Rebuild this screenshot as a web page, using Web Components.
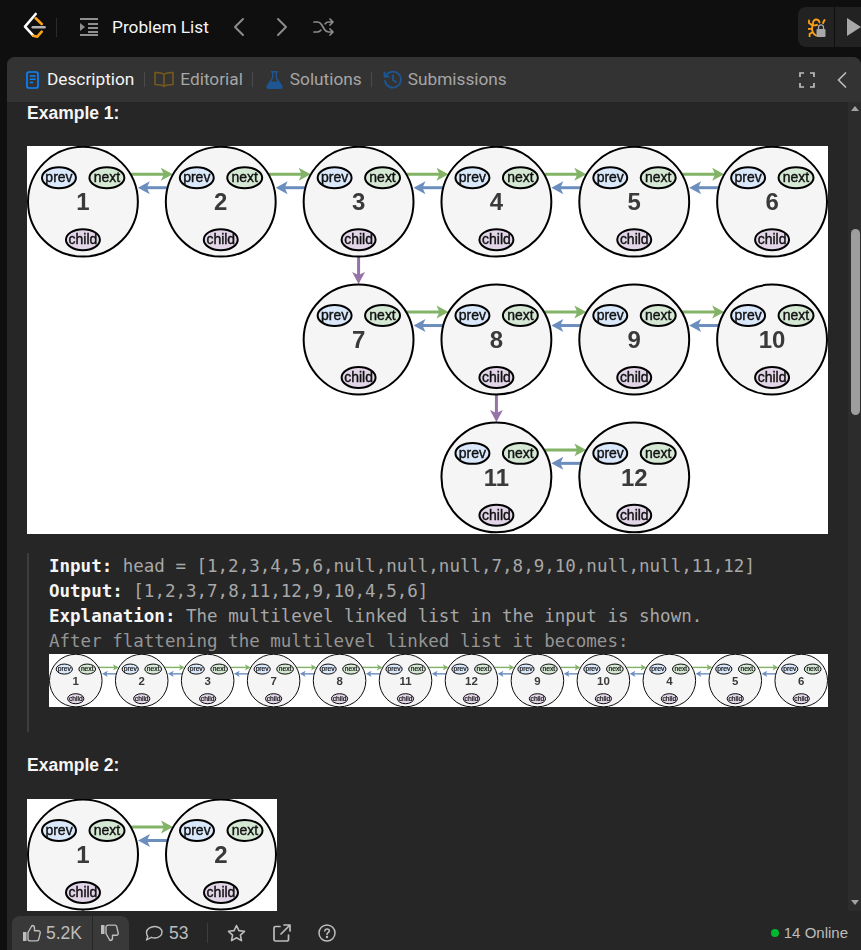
<!DOCTYPE html>
<html>
<head>
<meta charset="utf-8">
<style>
  html, body { margin: 0; height: 950px; overflow: hidden; background: #0f0f0f; font-family: Roboto, "Liberation Sans", sans-serif; }
  lc-app { height: 950px; }
</style>
</head>
<body>
<lc-app>
  <lc-topbar slot="top"></lc-topbar>
  <lc-panel>
    <lc-tabs slot="tabs"></lc-tabs>
    <lc-heading>Example 1:</lc-heading>
    <lc-diagram style="margin-top:21px" width="801" height="388" nodes="0:1 2 3 4 5 6;2:7 8 9 10;3:11 12"></lc-diagram>
    <lc-example>
      <lc-line label="Input:">head = [1,2,3,4,5,6,null,null,null,7,8,9,10,null,null,11,12]</lc-line>
      <lc-line label="Output:">[1,2,3,7,8,11,12,9,10,4,5,6]</lc-line>
      <lc-line label="Explanation:">The multilevel linked list in the input is shown.</lc-line>
      <lc-line>After flattening the multilevel linked list it becomes:</lc-line>
      <lc-diagram width="779" height="53" nodes="0:1 2 3 7 8 11 12 9 10 4 5 6"></lc-diagram>
    </lc-example>
    <lc-heading style="margin-top:21px">Example 2:</lc-heading>
    <lc-diagram style="margin-top:22px" width="250" height="112" stub nodes="0:1 2"></lc-diagram>
    <lc-footer slot="footer"></lc-footer>
  </lc-panel>
</lc-app>

<script>
const icons = {
  logo: `<svg width="24" height="26" viewBox="0 0 24 26" fill="none" stroke-width="2.6" stroke-linecap="round" stroke-linejoin="round"><path d="M13.7 2 3 14.7 11.3 23.7" stroke="#fff"/><path d="M13.7 6.3 19.7 12M11.3 23.7 15.3 24.7 19.7 19.7" stroke="#ffa116"/><path d="M10.8 15.3H22.5" stroke="#b3b3b3"/></svg>`,
  list: `<svg width="18" height="18" viewBox="0 0 18 18" fill="#8f8f8f"><path d="M0 0h18v2H0zM8 5h10v2H8zM8 9h10v2H8zM0 16h18v2H0zM8 13h10v2H8zM0 5l5 4-5 4z"/></svg>`,
  left: `<svg width="12" height="20" viewBox="0 0 12 20" fill="none" stroke="#8c8c8c" stroke-width="2" stroke-linecap="round" stroke-linejoin="round"><path d="M10 2 2 10l8 8"/></svg>`,
  right: `<svg width="12" height="20" viewBox="0 0 12 20" fill="none" stroke="#8c8c8c" stroke-width="2" stroke-linecap="round" stroke-linejoin="round"><path d="m2 2 8 8-8 8"/></svg>`,
  shuffle: `<svg width="21" height="18" viewBox="0 0 21 18" fill="none" stroke="#8c8c8c" stroke-width="1.7" stroke-linecap="round" stroke-linejoin="round"><path d="M1 4h3.500c2 0 3 1 4 2.500l3 5c1 1.500 2 2.500 4 2.500H20M1 14h3.500c1.500 0 2.500-.7 3.300-1.800M12.200 5.800C13 4.700 14 4 15.500 4H20M17 1l3 3-3 3M17 11l3 3-3 3"/></svg>`,
  bug: `<svg width="18" height="19" viewBox="0 0 18 19" fill="none"><path d="M5 5C5 2.800 6.800 1.300 8.500 1.500c1.600.2 2.800 1.400 3 3M4 6.500c1 .8 3 1 5 .3M5 6C3.800 9 3.800 12 5 14.500c.8 1.500 2 2.500 3 3M4.500 7.500 1 5V2.500M4 10.800H0M4.800 14 1.600 16V18.500M16.500 2 15 5" stroke="#ffa116" stroke-width="1.800" stroke-linecap="round"/><rect x="8.500" y="11" width="9" height="8" rx="1" fill="#a8a8a8"/><path d="M10.500 11V9.300a2.500 2.500 0 0 1 5 0V11" stroke="#a8a8a8" stroke-width="1.300"/></svg>`,
  doc: `<svg width="13" height="18" viewBox="0 0 13 18" fill="none"><rect x="1" y="1" width="11" height="16" rx="2" stroke="#0a84ff" stroke-width="1.700"/><path d="M3.800 5h5.800M3.800 8.300h5.800M3.800 11.600h3.200" stroke="#0a84ff" stroke-width="1.500"/></svg>`,
  book: `<svg width="20" height="17" viewBox="0 0 20 17" fill="none" stroke="#75591d" stroke-width="1.600"><path d="M10 3.500C8.500 2 6.500 1.500 1 1.500v12c5.500 0 7.500.4 9 1.800 1.500-1.400 3.500-1.800 9-1.800v-12c-5.500 0-7.500.5-9 2zM10 3.500v11.800"/></svg>`,
  flask: `<svg width="17" height="18" viewBox="0 0 17 18" fill="#1d5693"><path d="M5 0h7v1.500h-1v5l5.300 8.300c.8 1.400-.1 3.200-1.700 3.200H2.400C.8 18-.1 16.200.7 14.800L6 6.500v-5H5zM7.400 1.500v5.400L5.200 10.500h6.600L9.600 6.900V1.500z"/></svg>`,
  history: `<svg width="19" height="19" viewBox="0 0 19 19" fill="none" stroke="#1d5693" stroke-width="1.800" stroke-linecap="round" stroke-linejoin="round"><path d="M2.500 6.500A8 8 0 1 1 2 11M1.500 2.500v4.200h4.200M10 5.500v4.500l3 2"/></svg>`,
  full: `<svg width="16" height="16" viewBox="0 0 16 16" fill="none" stroke="#bdbdbd" stroke-width="1.700"><path d="M1 5V1h4M11 1h4v4M15 11v4h-4M5 15H1v-4"/></svg>`,
  collapse: `<svg width="10" height="16" viewBox="0 0 10 16" fill="none" stroke="#bdbdbd" stroke-width="1.700" stroke-linecap="round" stroke-linejoin="round"><path d="M8.500 1 1.500 8l7 7"/></svg>`,
  up: `<svg width="18" height="18" viewBox="0 0 18 18" fill="none" stroke="#bdbdbd" stroke-width="1.400" stroke-linejoin="round"><rect x="0" y="8" width="3.500" height="9" fill="#bdbdbd" stroke="none"/><path d="M5 8.500 9 1.500c1.500 0 2.500 1 2.500 2.500v2.700h4c1 0 2 1 1.700 2.200l-1.400 6.300c-.2 1-1 1.700-2 1.700H7.500C6 16.900 5 16 5 15z"/></svg>`,
  down: `<svg width="18" height="18" viewBox="0 0 18 18" fill="none" stroke="#bdbdbd" stroke-width="1.400" stroke-linejoin="round"><rect x="0" y="1" width="3.500" height="9" fill="#bdbdbd" stroke="none"/><path d="M5 9.500 9 16.500c1.500 0 2.500-1 2.500-2.500v-2.700h4c1 0 2-1 1.700-2.200l-1.400-6.300c-.2-1-1-1.700-2-1.700H7.500C6 1.100 5 2 5 3z"/></svg>`,
  comment: `<svg width="18" height="18" viewBox="0 0 18 18" fill="none" stroke="#bdbdbd" stroke-width="1.400" stroke-linejoin="round"><path d="M9.800 2.500c4 0 7.200 2.500 7.200 5.700s-3.200 5.800-7.200 5.800c-1.300 0-2.500-.3-3.500-.7L1.500 16l1.300-3.600C1.700 11.300 1.500 9.700 1.500 8.200c0-3.200 4.300-5.700 8.300-5.700z"/></svg>`,
  star: `<svg width="19" height="18" viewBox="0 0 19 18" fill="none" stroke="#bdbdbd" stroke-width="1.600" stroke-linejoin="round"><path d="m9.500 1.500 2.400 5.100 5.600.7-4.100 3.800 1.100 5.500-5-2.800-5 2.800 1.100-5.500L1.500 7.300l5.600-.7z"/></svg>`,
  share: `<svg width="18" height="18" viewBox="0 0 18 18" fill="none" stroke="#bdbdbd" stroke-width="1.700" stroke-linecap="round" stroke-linejoin="round"><path d="M7 2.500H2.500a1.500 1.500 0 0 0-1.500 1.500v11.500A1.500 1.500 0 0 0 2.500 17H14a1.500 1.500 0 0 0 1.500-1.500V11M11 1h6v6M17 1 8 10"/></svg>`,
  help: `<svg width="18" height="18" viewBox="0 0 18 18" fill="none" stroke="#bdbdbd" stroke-width="1.500" stroke-linecap="round"><circle cx="9" cy="9" r="8"/><path d="M6.800 7c.2-1.300 1.100-2 2.300-2 1.300 0 2.200.8 2.200 1.900 0 1.800-2.300 1.800-2.300 3.500"/><circle cx="9" cy="13" r=".5" fill="#bdbdbd"/></svg>`
};

class LcIcon extends HTMLElement {
  constructor() {
    super();
    this.attachShadow({mode: 'open'});
    this.shadowRoot.innerHTML = `<style>:host{display:inline-flex;align-items:center;justify-content:center;flex:none} svg{display:block}</style>` + (icons[this.getAttribute('name')] || '');
  }
}

class LcApp extends HTMLElement {
  constructor() {
    super();
    this.attachShadow({mode: 'open'});
    this.shadowRoot.innerHTML = `<style>
      :host { display: flex; flex-direction: column; }
      ::slotted(lc-panel) { flex: 1; min-height: 0; }
    </style><slot name="top"></slot><slot></slot>`;
  }
}

class LcTopbar extends HTMLElement {
  constructor() {
    super();
    this.attachShadow({mode: 'open'});
    this.shadowRoot.innerHTML = `<style>
      :host { display: flex; align-items: center; height: 57px; padding-left: 22px; box-sizing: border-box; color: #f5f5f5; font: 17.25px/24px Roboto, "Liberation Sans", sans-serif; }
      .logo { margin-top: -3px; }
      .sep { width: 1px; height: 19px; background: #2b2b2b; margin: -3px 23px 0 10px; }
      .title { margin: 0 24px 0 14px; position: relative; top: -2px; }
      lc-icon { position: relative; top: -2px; }
      .next { margin-left: 31px; }
      .shuffle { margin-left: 25px; }
      .group { margin-left: auto; width: 63px; height: 40px; margin-top: -3px; display: flex; background: #222; border-radius: 8px 0 0 8px; overflow: hidden; }
      .bug { width: 40px; display: flex; align-items: center; justify-content: center; border-right: 1px solid #0f0f0f; }
      .bug lc-icon { top: 0; margin-left: 1px; }
      .play { width: 0; height: 0; margin: 11px 0 0 12px; border-left: 14px solid #a8a8a8; border-top: 9px solid transparent; border-bottom: 9px solid transparent; }
    </style>
    <lc-icon class="logo" name="logo"></lc-icon>
    <div class="sep"></div>
    <lc-icon name="list"></lc-icon>
    <span class="title">Problem List</span>
    <lc-icon name="left"></lc-icon>
    <lc-icon class="next" name="right"></lc-icon>
    <lc-icon class="shuffle" name="shuffle"></lc-icon>
    <div class="group"><div class="bug"><lc-icon name="bug"></lc-icon></div><div class="play"></div></div>`;
  }
}

class LcTabs extends HTMLElement {
  constructor() {
    super();
    this.attachShadow({mode: 'open'});
    const tabs = [['doc', 'Description', 0, 8], ['book', 'Editorial', 0, 6], ['flask', 'Solutions', 3, 7], ['history', 'Submissions', 1, 6]];
    this.shadowRoot.innerHTML = `<style>
      :host { display: flex; align-items: center; height: 45px; padding-left: 19px; padding-right: 14px; background: #333; color: #a6a6a6; font: 17.25px/24px Roboto, "Liberation Sans", sans-serif; }
      .tab { display: flex; align-items: center; }
      .tab span { position: relative; top: -1px; }
      .active { color: #f5f5f5; }
      .sep { width: 1px; height: 15px; background: #4a4a4a; margin: 0 9.5px; }
      .end { margin-left: auto; display: flex; align-items: center; gap: 22px; }
    </style>` + tabs.map(([icon, label, before, gap], i) =>
      `${i ? '<div class="sep"></div>' : ''}<div class="tab ${i ? '' : 'active'}"><lc-icon name="${icon}" style="margin:0 ${gap}px 0 ${before}px"></lc-icon><span>${label}</span></div>`).join('') +
      `<div class="end"><lc-icon name="full"></lc-icon><lc-icon name="collapse"></lc-icon></div>`;
  }
}

class LcPanel extends HTMLElement {
  constructor() {
    super();
    this.attachShadow({mode: 'open'});
    this.shadowRoot.innerHTML = `<style>
      :host { display: flex; flex-direction: column; margin-left: 7px; border-radius: 8px 8px 0 0; overflow: hidden; background: #262626; }
      .middle { flex: 1; min-height: 0; display: flex; }
      .scroll { flex: 1; min-width: 0; overflow: hidden; padding: 0 20px; }
      .inner { margin-top: -1px; }
    </style>
    <slot name="tabs"></slot>
    <div class="middle"><div class="scroll"><div class="inner"><slot></slot></div></div><lc-scrollbar></lc-scrollbar></div>
    <slot name="footer"></slot>`;
  }
}

class LcScrollbar extends HTMLElement {
  constructor() {
    super();
    this.attachShadow({mode: 'open'});
    this.shadowRoot.innerHTML = `<style>
      :host { display: flex; flex-direction: column; flex: none; width: 13px; background: #2c2c2c; }
      .arrow { width: 0; height: 0; margin: 4px 0 0 3px; border-left: 4.500px solid transparent; border-right: 4.500px solid transparent; border-bottom: 5px solid #a3a3a3; }
      .thumb { width: 9px; height: 186px; margin: 118px 0 0 3px; background: #9e9e9e; border-radius: 5px; }
      .down { margin-top: auto; margin-bottom: 6px; border-bottom: 0; border-top: 5px solid #a3a3a3; }
    </style><div class="arrow"></div><div class="thumb"></div><div class="arrow down"></div>`;
  }
}

class LcHeading extends HTMLElement {
  constructor() {
    super();
    this.attachShadow({mode: 'open'});
    this.shadowRoot.innerHTML = `<style>:host { display: block; color: #f5f5f5; font: 700 17.5px/24px "Liberation Sans", Arial, sans-serif; }</style><slot></slot>`;
  }
}

class LcExample extends HTMLElement {
  constructor() {
    super();
    this.attachShadow({mode: 'open'});
    this.shadowRoot.innerHTML = `<style>
      :host { display: block; margin-top: 19px; padding: 1px 0 25px 20px; border-left: 2px solid #3d3d3d; }
    </style><slot></slot>`;
  }
}

class LcLine extends HTMLElement {
  constructor() {
    super();
    this.attachShadow({mode: 'open'});
    const label = this.getAttribute('label');
    this.shadowRoot.innerHTML = `<style>
      :host { display: block; height: 25px; color: ${label ? '#a8a8a8' : '#959595'}; font: 17.5px/25px "DejaVu Sans Mono", "Liberation Mono", monospace; white-space: pre; }
      b { color: #f5f5f5; }
    </style>${label ? `<b>${label}</b> ` : ''}<slot></slot>`;
  }
}

// rows look like "col:label label;col:label" and every row sits one step below the last
class LcDiagram extends HTMLElement {
  constructor() {
    super();
    this.attachShadow({mode: 'open'});
    const step = 138;
    const rows = this.getAttribute('nodes').split(';').map(row => {
      const [col, labels] = row.split(':');
      return {col: +col, labels: labels.split(' ')};
    });
    const fullW = Math.max(...rows.map(r => r.col + r.labels.length)) * step - step + 112;
    const w = +this.getAttribute('width');
    const h = +this.getAttribute('height');
    const k = w / fullW;

    const head = (x, y, dx, dy, color) => {
      const px = -dy, py = dx;
      return `<path fill="${color}" d="M${x} ${y}L${x - dx * 12 + px * 6.500} ${y - dy * 12 + py * 6.500}L${x - dx * 9} ${y - dy * 9}L${x - dx * 12 - px * 6.500} ${y - dy * 12 - py * 6.500}Z"/>`;
    };
    let links = '', circles = '';
    rows.forEach((row, r) => {
      row.labels.forEach((label, i) => {
        const x = 56 + (row.col + i) * step, y = 55.5 + r * step;
        if (i < row.labels.length - 1) {
          links += `<path d="M${x + 48} ${y - 27.500}H${x + 84}" stroke="#82b366" stroke-width="3"/>` + head(x + 90, y - 27.500, 1, 0, '#82b366');
          links += `<path d="M${x + 85} ${y - 14}H${x + 62}" stroke="#6c8ebf" stroke-width="3"/>` + head(x + 55, y - 14, -1, 0, '#6c8ebf');
        }
        if (r > 0 && i === 0) {
          links += `<path d="M${x} ${y - 83}V${y - 62}" stroke="#9673a6" stroke-width="3"/>` + head(x, y - 55.500, 0, 1, '#9673a6');
        }
        circles += `<g transform="translate(${x} ${y})">
          <circle r="55" fill="#f5f5f5" stroke="#000" stroke-width="2"/>
          <ellipse cx="-24" cy="-24" rx="17" ry="10.500" fill="#dae8fc" stroke="#000" stroke-width="2"/>
          <ellipse cx="24" cy="-24" rx="17.500" ry="10.500" fill="#d5e8d4" stroke="#000" stroke-width="2"/>
          <ellipse cx="0" cy="38" rx="17" ry="10.500" fill="#e1d5e7" stroke="#000" stroke-width="2"/>
          <text x="-24" y="-19.500" class="tag">prev</text>
          <text x="24" y="-19.500" class="tag">next</text>
          <text x="0" y="42.500" class="tag">child</text>
          <text x="0" y="8.500" class="num">${label}</text></g>`;
      });
    });
    if (this.hasAttribute('stub')) links += `<path d="M56 110V120" stroke="#9673a6" stroke-width="3"/>`;
    this.shadowRoot.innerHTML = `<style>
      :host { display: block; width: ${w}px; height: ${h}px; background: #fff; overflow: hidden; }
      svg { display: block; filter: blur(${k < 1 ? 0.4 : 0.25}px); }
      text { font-family: "Liberation Sans", Arial, sans-serif; text-anchor: middle; }
      .tag { font-size: 14px; fill: #111; stroke: #111; stroke-width: .4px; }
      .num { font-size: 24px; font-weight: 700; fill: #3a3a3a; }
    </style>
    <svg width="${w}" height="${Math.ceil(rows.length * step * k)}" viewBox="0 0 ${fullW} ${rows.length * step}">${links}${circles}</svg>`;
  }
}

class LcFooter extends HTMLElement {
  constructor() {
    super();
    this.attachShadow({mode: 'open'});
    this.shadowRoot.innerHTML = `<style>
      :host { display: flex; align-items: flex-end; height: 39px; padding-left: 5px; background: #262626; color: #bdbdbd; font: 17.5px/24px "Liberation Sans", Arial, sans-serif; }
      .bar { flex: 1; display: flex; align-items: center; height: 34px; }
      .votes { display: flex; height: 34px; background: #393939; border-radius: 8px 8px 0 0; }
      .like { display: flex; align-items: center; gap: 5px; width: 81px; padding-left: 11px; box-sizing: border-box; border-right: 1px solid #262626; }
      .dislike { display: flex; align-items: center; width: 36px; padding-left: 8px; box-sizing: border-box; }
      .count { display: flex; align-items: center; gap: 6px; margin-left: 16px; }
      .sep { width: 1px; height: 20px; background: #3d3d3d; margin: 0 19px 0 19px; }
      .gap { margin-left: 27px; }
      .online { margin-left: auto; margin-right: 13px; display: flex; align-items: center; gap: 5px; font-size: 15px; }
      .dot { width: 8px; height: 8px; border-radius: 50%; background: #00b82e; }
    </style>
    <div class="bar">
      <div class="votes">
        <div class="like"><lc-icon name="up"></lc-icon>5.2K</div>
        <div class="dislike"><lc-icon name="down"></lc-icon></div>
      </div>
      <div class="count"><lc-icon name="comment"></lc-icon>53</div>
      <div class="sep"></div>
      <lc-icon name="star"></lc-icon>
      <lc-icon class="gap" name="share"></lc-icon>
      <lc-icon class="gap" name="help"></lc-icon>
      <div class="online"><span class="dot"></span>14 Online</div>
    </div>`;
  }
}

customElements.define('lc-icon', LcIcon);
customElements.define('lc-app', LcApp);
customElements.define('lc-topbar', LcTopbar);
customElements.define('lc-tabs', LcTabs);
customElements.define('lc-panel', LcPanel);
customElements.define('lc-scrollbar', LcScrollbar);
customElements.define('lc-heading', LcHeading);
customElements.define('lc-example', LcExample);
customElements.define('lc-line', LcLine);
customElements.define('lc-diagram', LcDiagram);
customElements.define('lc-footer', LcFooter);
</script>
</body>
</html>
